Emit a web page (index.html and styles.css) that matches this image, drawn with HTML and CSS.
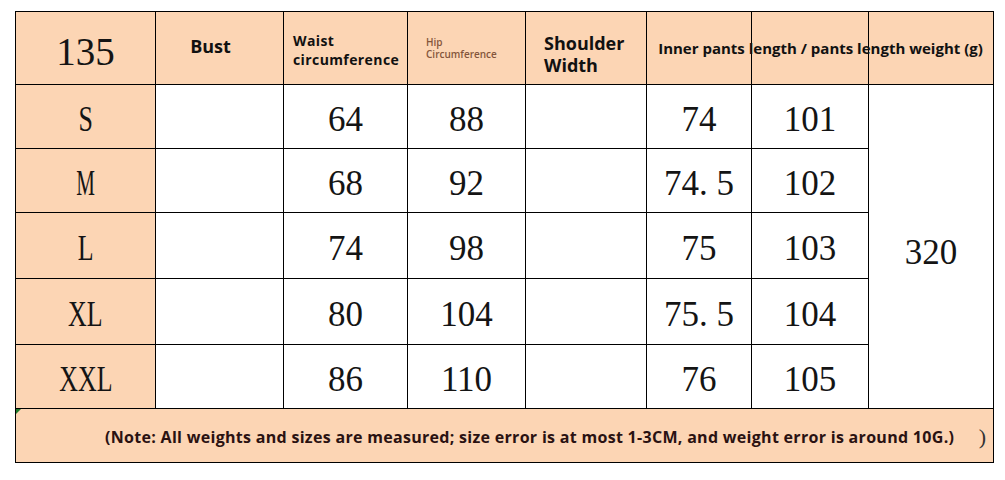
FILE: index.html
```html
<!DOCTYPE html>
<html lang="en">
<head>
<meta charset="utf-8">
<title>Size chart</title>
<link rel="stylesheet" href="styles.css">
</head>
<body>
<div class="sheet">
  <div class="cell peach"><span class="big">135</span></div>
  <div class="cell peach label bust">Bust</div>
  <div class="cell peach label waist">Waist<br>circumference</div>
  <div class="cell peach label hip">Hip<br>Circumference</div>
  <div class="cell peach label shoulder">Shoulder<br>Width</div>
  <div class="cell peach c6"></div>
  <div class="cell peach c7"></div>
  <div class="cell peach c8"></div>
  <div class="hdr-span label">Inner pants length / pants length weight (g)</div>

  <div class="cell weight">320</div>

  <div class="cell peach"><span class="sz">S</span></div>
  <div class="cell"></div>
  <div class="cell">64</div>
  <div class="cell">88</div>
  <div class="cell"></div>
  <div class="cell">74</div>
  <div class="cell">101</div>

  <div class="cell peach"><span class="sz sz-m">M</span></div>
  <div class="cell"></div>
  <div class="cell">68</div>
  <div class="cell">92</div>
  <div class="cell"></div>
  <div class="cell">74. 5</div>
  <div class="cell">102</div>

  <div class="cell peach"><span class="sz">L</span></div>
  <div class="cell"></div>
  <div class="cell">74</div>
  <div class="cell">98</div>
  <div class="cell"></div>
  <div class="cell">75</div>
  <div class="cell">103</div>

  <div class="cell peach"><span class="sz">XL</span></div>
  <div class="cell"></div>
  <div class="cell">80</div>
  <div class="cell">104</div>
  <div class="cell"></div>
  <div class="cell">75. 5</div>
  <div class="cell">104</div>

  <div class="cell peach"><span class="sz">XXL</span></div>
  <div class="cell"></div>
  <div class="cell">86</div>
  <div class="cell">110</div>
  <div class="cell"></div>
  <div class="cell">76</div>
  <div class="cell">105</div>

  <div class="cell peach note">
    <span class="flag"></span>
    <span class="note-text">(Note: All weights and sizes are measured; size error is at most 1-3CM, and weight error is around 10G.)</span>
    <span class="paren">)</span>
  </div>
</div>
</body>
</html>
```

FILE: styles.css
```css
html, body {
  margin: 0;
  background: #ffffff;
}

.sheet {
  display: grid;
  grid-template-columns: 140px 128px 124px 118px 121px 105px 117px 125px;
  grid-template-rows: 73px 64px 64px 66px 66px 64px 54px;
  width: max-content;
  margin: 11px 0 0 15px;
  border-left: 1px solid #000;
  border-top: 1px solid #000;
}

.cell {
  box-sizing: border-box;
  border-right: 1px solid #000;
  border-bottom: 1px solid #000;
  display: flex;
  align-items: center;
  justify-content: center;
  padding-top: 7px;
  font-family: "Liberation Serif", "Times New Roman", serif;
  font-size: 35px;
  color: #141414;
  background: #ffffff;
}

.peach {
  background: #fcd5b4;
}

.big {
  font-size: 39px;
}

.sz {
  display: inline-block;
  transform: scaleX(0.74);
}

.sz-m {
  transform: scaleX(0.6);
}

.label {
  font-family: "Open Sans", "Noto Sans", sans-serif;
  font-weight: 700;
  color: #111111;
}

.bust {
  font-size: 18px;
  padding: 0 18px 5px 0;
}

.waist {
  justify-content: flex-start;
  font-size: 14px;
  line-height: 19px;
  letter-spacing: 0.4px;
  white-space: nowrap;
  padding: 4px 0 0 9px;
}

.hip {
  justify-content: flex-start;
  font-size: 10px;
  font-weight: 600;
  line-height: 12px;
  color: #84553b;
  padding: 0 0 0 18px;
}

.shoulder {
  justify-content: flex-start;
  font-size: 18px;
  line-height: 22px;
  padding: 11px 0 0 18px;
}

.c6 { grid-row: 1; grid-column: 6; }
.c7 { grid-row: 1; grid-column: 7; }
.c8 { grid-row: 1; grid-column: 8; }

.hdr-span {
  grid-row: 1;
  grid-column: 6 / 9;
  display: flex;
  align-items: center;
  justify-content: center;
  font-size: 15px;
  white-space: nowrap;
  padding-bottom: 1px;
}

.weight {
  grid-column: 8;
  grid-row: 2 / 7;
  padding-top: 12px;
}

.note {
  grid-column: 1 / -1;
  position: relative;
  justify-content: flex-start;
  padding: 2px 0 0 89px;
}

.note-text {
  font-family: "Open Sans", "Noto Sans", sans-serif;
  font-weight: 700;
  font-size: 16px;
  letter-spacing: 0.3px;
  color: #2a1212;
}

.paren {
  margin-left: auto;
  margin-right: 7px;
  font-size: 22px;
  color: #333333;
}

.flag {
  position: absolute;
  left: 0;
  top: 0;
  width: 0;
  height: 0;
  border-top: 5px solid #1d7a2a;
  border-right: 5px solid transparent;
}
```
